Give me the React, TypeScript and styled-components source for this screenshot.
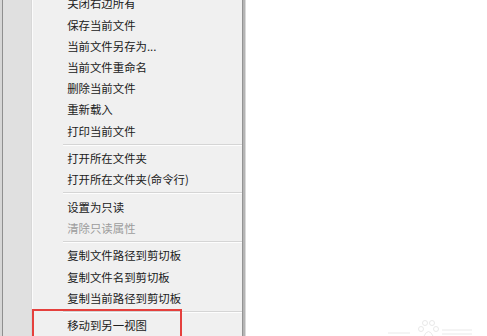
import styled, { createGlobalStyle } from 'styled-components'

const GlobalStyle = createGlobalStyle`
  html, body {
    margin: 0;
    padding: 0;
    background: #ffffff;
    overflow: hidden;
  }
`

const Page = styled.div`
  position: relative;
  width: 487px;
  height: 336px;
  overflow: hidden;
  background: #ffffff;
  font-family: "Noto Sans CJK SC", "Noto Sans", sans-serif;
`

const Menu = styled.div`
  display: flex;
  flex-direction: column;
  width: 239px;
  margin-top: -6.6px;
  margin-left: 2px;
  padding-bottom: 20px;
  border-left: 1px solid #8f8f8f;
  border-right: 1px solid #939393;
  box-shadow: -2px 0 0 #d6d6d6, 2px 0 0 #b4b4b4, 3px 0 0 #dadada;
  background: linear-gradient(
    to right,
    #e0e0e0 0 28px,
    #d8d8d8 28px 29px,
    #fbfbfb 29px 30px,
    #f0f0f0 30px
  );
`

const Item = styled.div<{ $disabled?: boolean }>`
  position: relative;
  height: 21.2px;
  line-height: 21.2px;
  padding-left: 64.2px;
  font-size: 11.4px;
  white-space: nowrap;
  color: ${p => (p.$disabled ? '#9c9c9c' : '#202020')};
`

const Separator = styled.div`
  height: 6.3px;
  box-sizing: border-box;
  padding-top: 1.8px;
  margin-left: 60px;
  &::before {
    content: '';
    display: block;
    border-top: 1px solid #d5d5d5;
    border-bottom: 1px solid #fdfdfd;
  }
`

const Annotation = styled.span`
  position: absolute;
  left: 28.6px;
  top: -6.6px;
  width: 146px;
  height: 40px;
  border: 2px solid #e5403d;
  pointer-events: none;
`

const Watermark = styled.svg`
  position: absolute;
  left: 380px;
  top: 316px;
`

type Entry = { label?: string; disabled?: boolean; marked?: boolean; sep?: boolean }

const entries: Entry[] = [
  { label: '关闭右边所有' },
  { label: '保存当前文件' },
  { label: '当前文件另存为...' },
  { label: '当前文件重命名' },
  { label: '删除当前文件' },
  { label: '重新载入' },
  { label: '打印当前文件' },
  { sep: true },
  { label: '打开所在文件夹' },
  { label: '打开所在文件夹(命令行)' },
  { sep: true },
  { label: '设置为只读' },
  { label: '清除只读属性', disabled: true },
  { sep: true },
  { label: '复制文件路径到剪切板' },
  { label: '复制文件名到剪切板' },
  { label: '复制当前路径到剪切板' },
  { sep: true },
  { label: '移动到另一视图', marked: true },
]

export default function App() {
  return (
    <Page>
      <GlobalStyle />
      <Menu>
        {entries.map((e, i) =>
          e.sep ? (
            <Separator key={i} />
          ) : (
            <Item key={i} $disabled={e.disabled}>
              {e.label}
              {e.marked && <Annotation />}
            </Item>
          )
        )}
      </Menu>
      <Watermark width="100" height="20" viewBox="0 0 100 20">
        <g fill="none" stroke="#e9e9e9" strokeWidth="1">
          <circle cx="45" cy="7" r="2.5" />
          <circle cx="52" cy="7" r="2.5" />
          <circle cx="41" cy="13" r="2.5" />
          <circle cx="56" cy="13" r="2.5" />
          <path d="M44 20 Q48.5 11 53 20" />
          <path d="M8 17 H30 M62 14 H92 M62 18 H92" />
        </g>
      </Watermark>
    </Page>
  )
}
